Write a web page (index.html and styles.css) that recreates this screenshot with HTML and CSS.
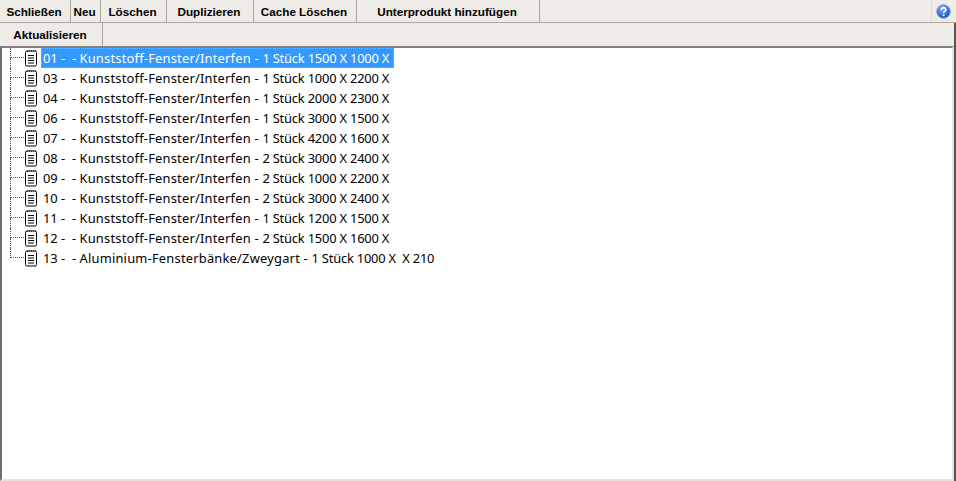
FILE: index.html
```html
<!DOCTYPE html>
<html lang="de">
<head>
<meta charset="utf-8">
<title>Produkte</title>
<link rel="stylesheet" href="styles.css">
</head>
<body>
<svg class="defs" width="0" height="0" aria-hidden="true">
  <symbol id="note" viewBox="0 0 14 18">
    <path d="M1.500 3.500a1.500 1.500 0 0 1 1.500-1.500h8a1.500 1.500 0 0 1 1.500 1.500v12a1.500 1.500 0 0 1-1.500 1.500h-8a1.500 1.500 0 0 1-1.500-1.500z" fill="#fff" stroke="#000"/>
    <path d="M3.500 1v2M5.500 1v2M7.500 1v2M9.500 1v2M11.500 1v2" stroke="#444" stroke-width="1"/>
    <path d="M4 6.500h6M4 9h6M4 11.500h6M4 14h6" stroke="#000" stroke-width="1"/>
  </symbol>
</svg>
<div class="toolbar">
  <div class="tool w-schliessen">Schließen</div>
  <div class="tool w-neu">Neu</div>
  <div class="tool w-loeschen">Löschen</div>
  <div class="tool w-dup">Duplizieren</div>
  <div class="tool w-cache">Cache Löschen</div>
  <div class="tool w-unter">Unterprodukt hinzufügen</div>
  <div class="help">
    <svg width="15" height="15" viewBox="0 0 15 15"><defs><radialGradient id="hg" cx="40%" cy="30%" r="75%"><stop offset="0" stop-color="#7fb2f0"/><stop offset="1" stop-color="#1048b8"/></radialGradient></defs><circle cx="7.500" cy="7.500" r="6.800" fill="url(#hg)" stroke="#7f9fdc" stroke-width="1"/><path d="M5.300 5.800c0-2.800 4.500-2.800 4.500-.2 0 1.700-2.200 1.700-2.200 3.500" fill="none" stroke="#fff" stroke-width="1.600"/><rect x="6.700" y="10.300" width="1.800" height="1.800" fill="#fff"/></svg>
  </div>
</div>
<div class="main">
  <div class="subbar">
    <div class="tool w-akt">Aktualisieren</div>
  </div>
  <div class="frame">
    <ul class="tree">
      <li class="row"><span class="conn"></span><svg class="ico"><use href="#note"/></svg><span class="label selected">01 -  - <span class="name">Kunststoff-Fenster/Interfen - </span><span class="dims">1 Stück 1500 X 1000 X</span></span></li>
      <li class="row"><span class="conn"></span><svg class="ico"><use href="#note"/></svg><span class="label">03 -  - <span class="name">Kunststoff-Fenster/Interfen - </span><span class="dims">1 Stück 1000 X 2200 X</span></span></li>
      <li class="row"><span class="conn"></span><svg class="ico"><use href="#note"/></svg><span class="label">04 -  - <span class="name">Kunststoff-Fenster/Interfen - </span><span class="dims">1 Stück 2000 X 2300 X</span></span></li>
      <li class="row"><span class="conn"></span><svg class="ico"><use href="#note"/></svg><span class="label">06 -  - <span class="name">Kunststoff-Fenster/Interfen - </span><span class="dims">1 Stück 3000 X 1500 X</span></span></li>
      <li class="row"><span class="conn"></span><svg class="ico"><use href="#note"/></svg><span class="label">07 -  - <span class="name">Kunststoff-Fenster/Interfen - </span><span class="dims">1 Stück 4200 X 1600 X</span></span></li>
      <li class="row"><span class="conn"></span><svg class="ico"><use href="#note"/></svg><span class="label">08 -  - <span class="name">Kunststoff-Fenster/Interfen - </span><span class="dims">2 Stück 3000 X 2400 X</span></span></li>
      <li class="row"><span class="conn"></span><svg class="ico"><use href="#note"/></svg><span class="label">09 -  - <span class="name">Kunststoff-Fenster/Interfen - </span><span class="dims">2 Stück 1000 X 2200 X</span></span></li>
      <li class="row"><span class="conn"></span><svg class="ico"><use href="#note"/></svg><span class="label">10 -  - <span class="name">Kunststoff-Fenster/Interfen - </span><span class="dims">2 Stück 3000 X 2400 X</span></span></li>
      <li class="row"><span class="conn"></span><svg class="ico"><use href="#note"/></svg><span class="label">11 -  - <span class="name">Kunststoff-Fenster/Interfen - </span><span class="dims">1 Stück 1200 X 1500 X</span></span></li>
      <li class="row"><span class="conn"></span><svg class="ico"><use href="#note"/></svg><span class="label">12 -  - <span class="name">Kunststoff-Fenster/Interfen - </span><span class="dims">2 Stück 1500 X 1600 X</span></span></li>
      <li class="row last"><span class="conn"></span><svg class="ico"><use href="#note"/></svg><span class="label">13 -  - <span class="name">Aluminium-Fensterbänke/Zweygart - </span><span class="dims">1 Stück 1000 X  X 210</span></span></li>
    </ul>
  </div>
</div>
</body>
</html>
```
FILE: styles.css
```css
* { box-sizing: border-box; }
html, body { margin: 0; height: 100%; overflow: hidden; }
body {
  width: 956px;
  height: 481px;
  background: #efebe7;
  display: flex;
  flex-direction: column;
  font-family: "Liberation Sans", Arial, sans-serif;
}
.defs { position: absolute; }
.toolbar {
  display: flex;
  height: 23px;
  flex: none;
  border-bottom: 1px solid #a9a7a4;
}
.main {
  flex: 1;
  display: flex;
  flex-direction: column;
  min-height: 0;
  border-right: 2px solid #555;
}
.subbar {
  display: flex;
  height: 23px;
  flex: none;
}
.tool {
  font-size: 11.7px;
  font-weight: bold;
  color: #000;
  display: flex;
  align-items: center;
  justify-content: center;
  border-right: 1px solid #a9a7a4;
  padding-right: 2px;
  white-space: nowrap;
}
.w-schliessen { width: 71px; }
.w-neu { width: 30px; }
.w-loeschen { width: 66px; }
.w-dup { width: 87px; }
.w-cache { width: 103px; }
.w-unter { width: 183px; }
.w-akt { width: 103px; }
.help {
  margin-left: auto;
  width: 25px;
  border-left: 1px solid #dedbd6;
  padding: 4px 0 0 4px;
}
.frame {
  flex: 1;
  background: #fff;
  border-style: solid;
  border-color: #808080 #e4e2de #e4e2de #6f6f6f;
  border-width: 2px;
  min-height: 0;
}
.tree {
  list-style: none;
  margin: 0;
  padding: 0;
}
.row {
  height: 20px;
  display: flex;
  align-items: center;
  position: relative;
  padding-left: 8px;
}
.conn {
  width: 14px;
  height: 50%;
  align-self: flex-start;
  border-left: 1px dotted #555;
  border-bottom: 1px dotted #555;
  flex: none;
}
.row::after {
  content: "";
  position: absolute;
  left: 8px;
  top: 10px;
  height: 10px;
  border-left: 1px dotted #555;
}
.row.last::after { display: none; }
.ico {
  width: 14px;
  height: 18px;
  flex: none;
  margin-right: 3px;
}
.label {
  font-family: "Noto Sans", sans-serif;
  font-size: 12.9px;
  line-height: 18px;
  height: 20px;
  padding: 0 4px 0 1px;
  color: #000;
  white-space: pre;
  border: 1px solid transparent;
}
.name { letter-spacing: 0.21px; }
.dims { letter-spacing: -0.2px; }
.label.selected {
  background: #3399ff;
  color: #fff;
  border: 1px dotted #000;
  outline: 1px dotted #e8a040;
  outline-offset: -1px;
}
```
